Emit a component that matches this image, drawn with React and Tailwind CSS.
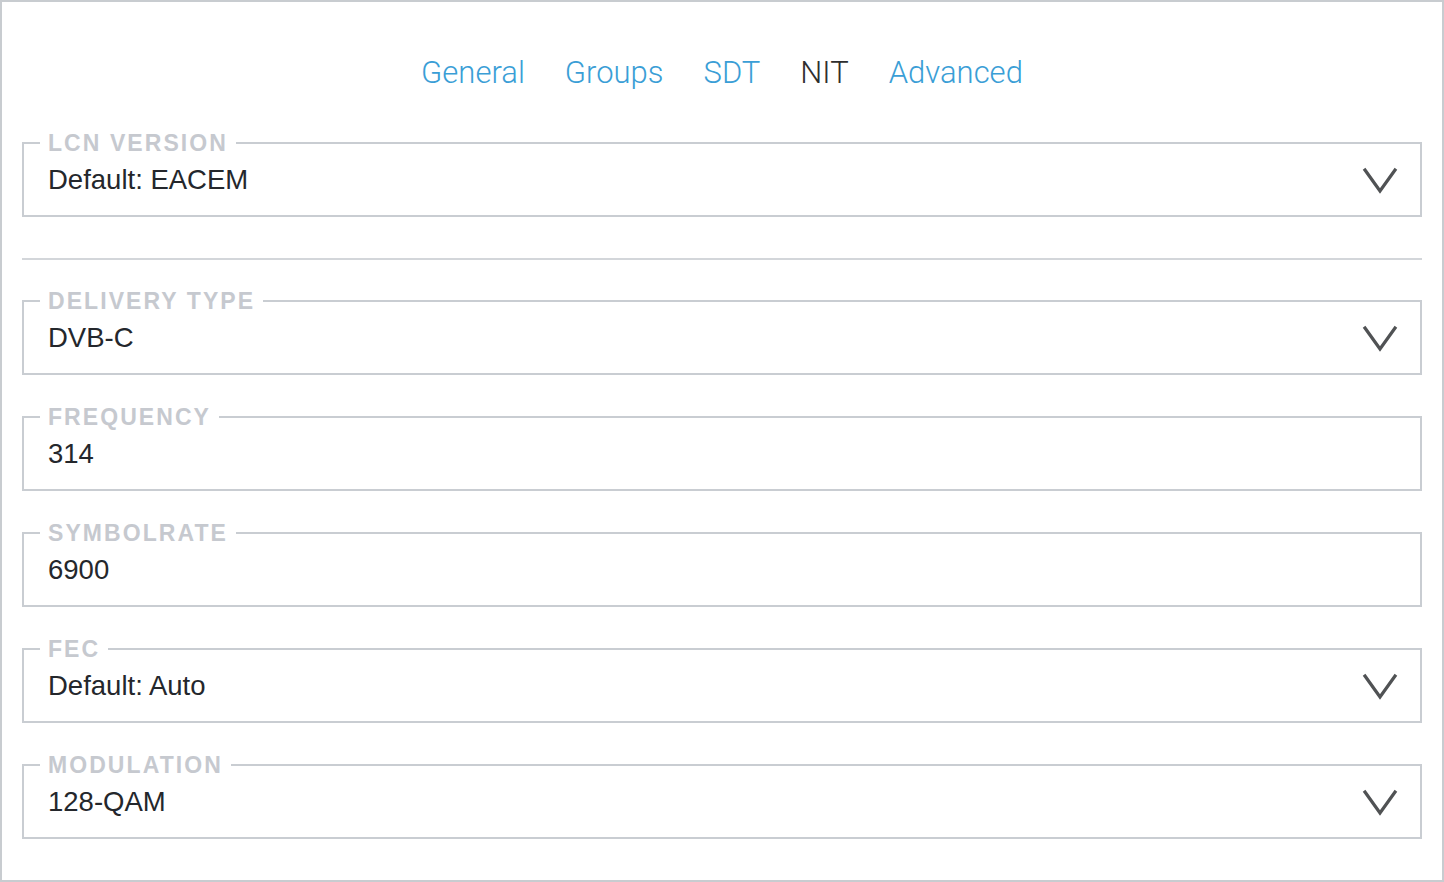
import React from 'react';

const tabs = [
    { label: 'General', active: false },
    { label: 'Groups', active: false },
    { label: 'SDT', active: false },
    { label: 'NIT', active: true },
    { label: 'Advanced', active: false },
];

const Chevron = () => (
    <svg width="36" height="28" viewBox="0 0 36 28" fill="none" className="shrink-0" aria-hidden>
        <path d="M3 4 L18 25 L33 4" stroke="#505254" strokeWidth="3.2" strokeLinecap="square" strokeLinejoin="miter" />
    </svg>
);

const Field = ({ label, value, select, className = '' }) => (
    <fieldset className={`mx-5 rounded-none border-2 border-[#c9cdd2] px-4 pb-[19px] ${className}`}>
        <legend className="px-2 text-[23px] font-bold uppercase leading-[22px] tracking-[0.09em] text-[#c6c9cf]">
            {label}
        </legend>
        <div className="mt-[10px] flex h-[32px] items-center justify-between pl-2 pr-[6px]">
            <span className="text-[27.5px] leading-[32px] text-[#24272c]">{value}</span>
            {select && <Chevron />}
        </div>
    </fieldset>
);

export default function App() {
    return (
        <div className="box-border h-[882px] w-full border-2 border-[#c8ccd0] bg-white font-['Liberation_Sans',Arial,sans-serif]">
            <nav className="flex justify-center gap-10 pt-[53px]">
                {tabs.map((t) => (
                    <span
                        key={t.label}
                        className={`font-['Roboto',sans-serif] text-[31px] font-light leading-[36px] ${t.active ? 'text-[#2e2e2e]' : 'text-[#3a9ed6]'}`}
                    >
                        {t.label}
                    </span>
                ))}
            </nav>

            <Field label="LCN Version" value="Default: EACEM" select className="mt-[41px]" />

            <div className="mx-5 mt-[41px] h-[2px] bg-[#d3d6da]" />

            <div className="mt-[30px] flex flex-col gap-[31px]">
                <Field label="Delivery Type" value="DVB-C" select />
                <Field label="Frequency" value="314" />
                <Field label="Symbolrate" value="6900" />
                <Field label="FEC" value="Default: Auto" select />
                <Field label="Modulation" value="128-QAM" select />
            </div>
        </div>
    );
}
